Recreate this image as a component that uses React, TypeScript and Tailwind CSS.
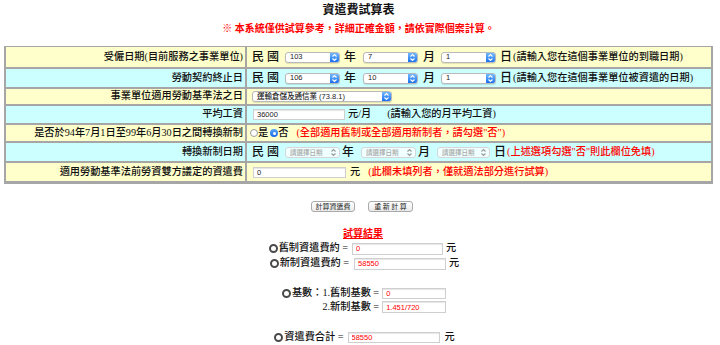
import type { JSX } from "react";

const Y = "bg-[#ffffcc]";
const C = "bg-[#ccffff]";

function Arrows({ muted }: { muted?: boolean }): JSX.Element {
  return (
    <svg width="7" height="9" viewBox="0 0 7 9" fill="none">
      <path d="M1.5 3.5 L3.5 1.5 L5.5 3.5" stroke={muted ? "#9a9a9a" : "#fff"} strokeWidth="1.1" />
      <path d="M1.5 5.5 L3.5 7.5 L5.5 5.5" stroke={muted ? "#9a9a9a" : "#fff"} strokeWidth="1.1" />
    </svg>
  );
}

function AquaSelect({ value, className }: { value: string; className: string }): JSX.Element {
  return (
    <span
      className={`inline-flex h-[11px] items-stretch overflow-hidden rounded-[3px] border border-[#b9b9b9] bg-white shadow-[0_1px_1px_rgba(0,0,0,0.12)] ${className}`}
    >
      <span className="flex flex-1 items-center pl-[4px] font-['Liberation_Sans','Noto_Sans_CJK_TC',sans-serif] text-[7.5px] leading-none text-[#222]">
        {value}
      </span>
      <span className="flex w-[9px] items-center justify-center bg-linear-to-b from-[#72b8fc] to-[#1570ee]">
        <Arrows />
      </span>
    </span>
  );
}

function DateSelect({ className }: { className: string }): JSX.Element {
  return (
    <span
      className={`inline-flex h-[11px] items-center justify-between rounded-[3px] border border-[#d6d6d6] bg-white/70 pl-[4px] pr-[2px] ${className}`}
    >
      <span className="font-['Noto_Sans_CJK_TC',sans-serif] text-[6.5px] leading-none text-[#a8a8a8]">請選擇日期</span>
      <Arrows muted />
    </span>
  );
}

function Field({ value, className, red }: { value: string; className: string; red?: boolean }): JSX.Element {
  return (
    <input
      readOnly
      value={value}
      className={`border border-[#cfcfcf] bg-white pl-[3px] font-['Liberation_Sans',sans-serif] text-[7.5px] leading-none shadow-[inset_0_1px_1px_rgba(0,0,0,0.1)] outline-none ${red ? "text-[#f00]" : "text-[#222]"} ${className}`}
    />
  );
}

function Label({ children, bg, h }: { children: React.ReactNode; bg: string; h: string }): JSX.Element {
  return (
    <div className={`flex items-center justify-end pr-[2px] text-[10.2px] font-medium leading-none text-[#111] ${bg} ${h}`}>
      {children}
    </div>
  );
}

function Radio({ checked }: { checked?: boolean }): JSX.Element {
  return checked ? (
    <span className="flex h-[8px] w-[8px] items-center justify-center rounded-full bg-linear-to-b from-[#5aa7fa] to-[#1266e6]">
      <span className="h-[3px] w-[3px] rounded-full bg-white" />
    </span>
  ) : (
    <span className="block h-[8px] w-[8px] rounded-full border border-[#9d9d9d] bg-white" />
  );
}

function Ring(): JSX.Element {
  return <span className="mr-[1px] block h-[9px] w-[9px] rounded-full border-[2.5px] border-[#4a4a4a]" />;
}

export default function App(): JSX.Element {
  return (
    <div className="h-[345px] w-[720px] overflow-hidden bg-white font-['Liberation_Serif','Noto_Sans_CJK_TC',serif] text-[#111]">
      <div className="w-[717px]">
        <h1 className="pt-[3px] text-center text-[12px] font-bold leading-[14px]">資遣費試算表</h1>
        <p className="mt-[6px] text-center text-[10px] font-bold leading-[12px] text-[#f00]">
          ※ 本系統僅供試算參考，詳細正確金額，請依實際個案計算。
        </p>

        <div className="ml-[4px] mt-[11px] grid w-[709px] grid-cols-[239px_1fr] gap-[2px] bg-[#a6a6a6] px-[2px] pb-[3px] pt-[1px] font-medium">
          <Label bg={Y} h="h-[20px]">受僱日期(目前服務之事業單位)</Label>
          <div className={`flex items-center pl-[5px] ${Y}`}>
            <span className="text-[12px] leading-none">民 國</span>
            <AquaSelect value="103" className="ml-[6px] w-[55px]" />
            <span className="ml-[4px] text-[12px] leading-none">年</span>
            <AquaSelect value="7" className="ml-[7px] w-[55px]" />
            <span className="ml-[5px] text-[12px] leading-none">月</span>
            <AquaSelect value="1" className="ml-[6px] w-[55px]" />
            <span className="ml-[4px] text-[12px] leading-none">日</span>
            <span className="ml-[1px] text-[10.2px] leading-none">(請輸入您在這個事業單位的到職日期)</span>
          </div>

          <Label bg={C} h="h-[18px]">勞動契約終止日</Label>
          <div className={`flex items-center pl-[5px] ${C}`}>
            <span className="text-[12px] leading-none">民 國</span>
            <AquaSelect value="106" className="ml-[6px] w-[55px]" />
            <span className="ml-[4px] text-[12px] leading-none">年</span>
            <AquaSelect value="10" className="ml-[7px] w-[55px]" />
            <span className="ml-[5px] text-[12px] leading-none">月</span>
            <AquaSelect value="1" className="ml-[6px] w-[55px]" />
            <span className="ml-[4px] text-[12px] leading-none">日</span>
            <span className="ml-[1px] text-[10.2px] leading-none">(請輸入您在這個事業單位被資遣的日期)</span>
          </div>

          <Label bg={Y} h="h-[15px]">事業單位適用勞動基準法之日</Label>
          <div className={`flex items-center pl-[5px] ${Y}`}>
            <AquaSelect value="運輸倉儲及通信業 (73.8.1)" className="w-[140px]" />
          </div>

          <Label bg={C} h="h-[17px]">平均工資</Label>
          <div className={`flex items-center pl-[6px] ${C}`}>
            <Field value="36000" className="h-[11px] w-[92px]" />
            <span className="ml-[3px] text-[10.2px] leading-none">元/月</span>
            <span className="ml-[16px] text-[10.2px] leading-none">(請輸入您的月平均工資)</span>
          </div>

          <Label bg={Y} h="h-[16px]">是否於94年7月1日至99年6月30日之間轉換新制</Label>
          <div className={`flex items-center pl-[3px] ${Y}`}>
            <Radio />
            <span className="text-[10.2px] leading-none">是</span>
            <span className="ml-[2px] flex">
              <Radio checked />
            </span>
            <span className="text-[10.2px] leading-none">否</span>
            <span className="ml-[8px] text-[10.2px] leading-none text-[#f00]">
              (全部適用舊制或全部適用新制者，請勾選"否")
            </span>
          </div>

          <Label bg={C} h="h-[18px]">轉換新制日期</Label>
          <div className={`flex items-center pl-[5px] ${C}`}>
            <span className="text-[12px] leading-none">民 國</span>
            <DateSelect className="ml-[6px] w-[55px]" />
            <span className="ml-[2px] text-[12px] leading-none">年</span>
            <DateSelect className="ml-[7px] w-[55px]" />
            <span className="ml-[2px] text-[12px] leading-none">月</span>
            <DateSelect className="ml-[7px] w-[53px]" />
            <span className="ml-[4px] text-[12px] leading-none">日</span>
            <span className="ml-[1px] text-[10.2px] leading-none text-[#f00]">(上述選項勾選"否"則此欄位免填)</span>
          </div>

          <Label bg={Y} h="h-[18px]">適用勞動基準法前勞資雙方議定的資遣費</Label>
          <div className={`flex items-center pl-[6px] ${Y}`}>
            <Field value="0" className="h-[11px] w-[93px]" />
            <span className="ml-[4px] text-[10.2px] leading-none">元</span>
            <span className="ml-[8px] text-[10.2px] leading-none text-[#f00]">(此欄未填列者，僅就適法部分進行試算)</span>
          </div>
        </div>

        <div className="mt-[17px] flex h-[11px] justify-center gap-[13px] pl-[7px]">
          <button className="h-[11px] w-[44px] rounded-[3px] border border-[#a9a9a9] bg-linear-to-b from-white to-[#ebebeb] font-['Noto_Sans_CJK_TC',sans-serif] text-[7px] leading-none text-[#222]">
            計算資遣費
          </button>
          <button className="h-[11px] w-[45px] rounded-[3px] border border-[#a9a9a9] bg-linear-to-b from-white to-[#ebebeb] font-['Noto_Sans_CJK_TC',sans-serif] text-[7px] leading-none text-[#222]">
            重 新 計 算
          </button>
        </div>

        <div className="mt-[15px] flex h-[14px] items-center justify-center pl-[9px]">
          <span className="text-[10px] font-bold leading-none text-[#f00] underline underline-offset-1">試算結果</span>
        </div>

        <div className="font-medium">
          <div className="flex h-[15px] items-center justify-center pl-[8px] text-[10.2px] leading-none">
            <Ring />
            <span>舊制資遣費約 =</span>
            <Field red value="0" className="ml-[4px] h-[12px] w-[91px]" />
            <span className="ml-[3px]">元</span>
          </div>
          <div className="flex h-[15px] items-center justify-center pl-[12px] text-[10.2px] leading-none">
            <Ring />
            <span>新制資遣費約 =</span>
            <Field red value="58550" className="ml-[5px] h-[12px] w-[92px]" />
            <span className="ml-[3px]">元</span>
          </div>

          <div className="mt-[15px] flex justify-center pl-[11px] text-[10.2px] leading-none">
            <div className="flex flex-col items-end">
              <div className="flex h-[14px] items-center">
                <Ring />
                <span>基數：1.舊制基數 =</span>
                <Field red value="0" className="ml-[3px] h-[11px] w-[64px]" />
              </div>
              <div className="flex h-[14px] items-center">
                <span>2.新制基數 =</span>
                <Field red value="1.451/720" className="ml-[3px] h-[12px] w-[64px]" />
              </div>
            </div>
          </div>

          <div className="mt-[16px] flex h-[14px] items-center justify-center pl-[12px] text-[10.2px] leading-none">
            <Ring />
            <span>資遣費合計 =</span>
            <Field red value="58550" className="ml-[4px] h-[11px] w-[92px]" />
            <span className="ml-[5px]">元</span>
          </div>
        </div>
      </div>
    </div>
  );
}
